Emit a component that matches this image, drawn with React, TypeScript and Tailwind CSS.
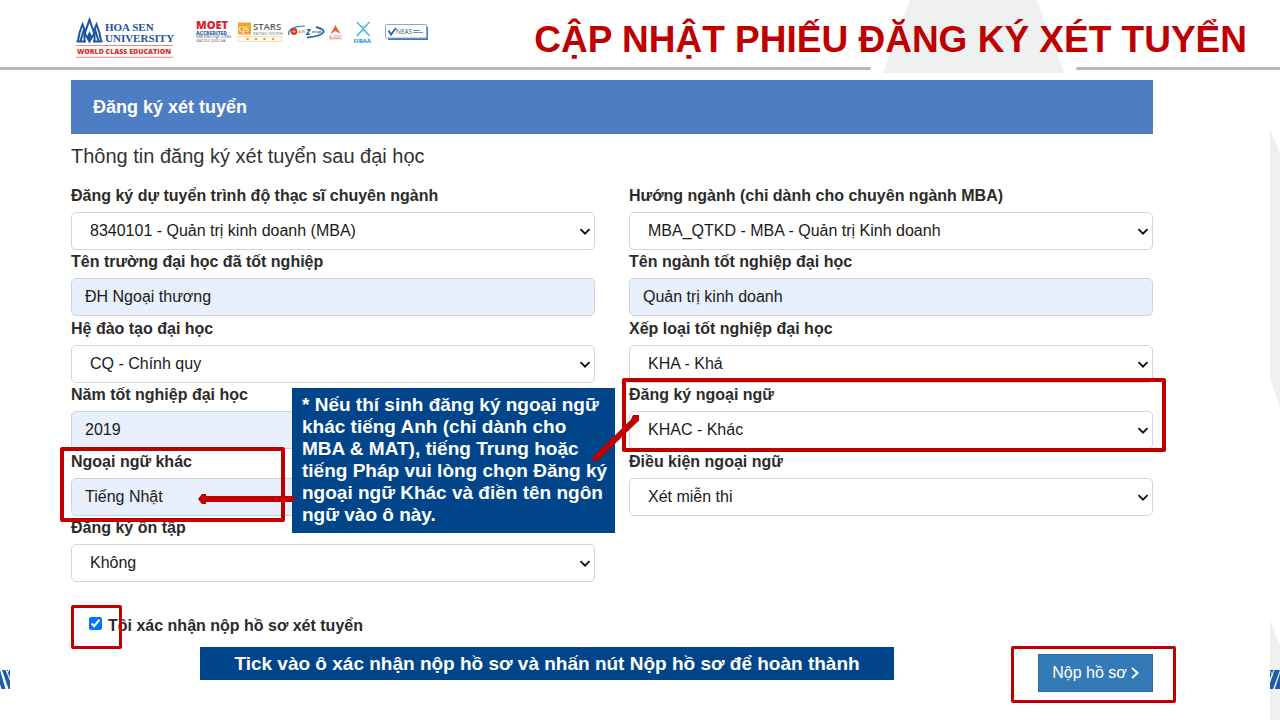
import { useState, type ReactNode } from "react";

type FieldProps = {
  id: string;
  label: string;
  value: string;
  kind: "select" | "text";
  children?: ReactNode;
};

function Field({ id, label, value, kind, children }: FieldProps) {
  return (
    <div className="relative flex flex-col justify-end">
      <label htmlFor={id} className="h-7 text-base leading-6 font-bold text-[#2b2b2b]">
        {label}
      </label>
      {kind === "select" ? (
        <div className="relative">
          <select
            id={id}
            defaultValue={value}
            className="block h-[38px] w-full appearance-none rounded-[5px] border border-[#d4d4d4] bg-white pr-8 pl-[18px] text-base text-[#1a1a1a]"
          >
            <option>{value}</option>
          </select>
          <svg
            className="pointer-events-none absolute top-4 right-1 text-[#111]"
            width="12"
            height="8"
            viewBox="0 0 12 8"
            aria-hidden="true"
          >
            <path d="M1.500 1.200 L6 5.700 L10.500 1.200" fill="none" stroke="currentColor" strokeWidth="1.900" />
          </svg>
        </div>
      ) : (
        <input
          id={id}
          type="text"
          defaultValue={value}
          className="h-[38px] w-full rounded-[5px] border border-[#cdd3de] bg-[#e8effd] px-[13px] text-base text-[#1a1a1a]"
        />
      )}
      {children}
    </div>
  );
}

function Brand() {
  return (
    <svg width="98" height="46" viewBox="76 14 98 46" role="img" aria-label="Hoa Sen University">
      <g fill="none" stroke="#1b55a3" strokeWidth="2">
        <path d="M84.500 41 L84.500 34 L89.500 20 L94.500 34 L94.500 41" />
        <path d="M78 41 L79.500 33 L82.500 24.500 L85 31 M101 41 L99.500 33 L96.500 24.500 L94 31" />
        <path d="M80.500 41 L83.500 31 L89.500 41.500 L95.500 31 L98.500 41" />
        <path d="M76.500 41.500 H86 M93 41.500 H102.500" />
      </g>
      <path d="M89.500 17 L91.500 23 H87.500 Z M89.500 31 L92 36.500 L89.500 42.500 L87 36.500 Z" fill="#1b55a3" />
      <g fill="#1b55a3" fontFamily="'Liberation Serif', serif" fontWeight="700">
        <text x="105" y="31" fontSize="11">HOA SEN</text>
        <text x="105" y="42" fontSize="11">UNIVERSITY</text>
      </g>
      <path d="M76 45.500 H173 M76 57.300 H173" stroke="#e58a86" />
      <text x="77" y="54" fontSize="7" fill="#dc2d27" fontFamily="'Open Sans', sans-serif" fontWeight="800">
        WORLD CLASS EDUCATION
      </text>
    </svg>
  );
}

function Accreditations() {
  return (
    <svg width="234" height="34" viewBox="196 14 234 34" role="img" aria-label="Accreditations" fontFamily="'Open Sans', sans-serif">
      <text x="196" y="29" fontSize="11" fontWeight="800" fill="#d8232a">MOET</text>
      <text x="196" y="34.500" fontSize="5" fontWeight="800" fill="#2a6eb2">ACCREDITED</text>
      <text x="196" y="38" fontSize="3" fill="#444">KIỂM ĐỊNH CHẤT LƯỢNG</text>
      <text x="196" y="41.500" fontSize="3" fill="#444">GIÁO DỤC QUỐC GIA</text>

      <rect x="238" y="22.500" width="13" height="12" fill="#eea52b" />
      <text x="239" y="31.500" fontSize="8" fill="#fff" fontFamily="'Liberation Serif', serif">QS</text>
      <text x="253" y="30" fontSize="9.500" fontWeight="600" fill="#5b5b5d">STARS</text>
      <text x="253" y="35" fontSize="4" fill="#777">RATING SYSTEM</text>
      <rect x="238" y="36.500" width="44" height="5" fill="#fffaf0" stroke="#f2d7a0" strokeWidth=".7" />
      <g fill="#eea52b">
        <circle cx="247.500" cy="39" r="1.300" />
        <circle cx="256" cy="39" r="1.300" />
        <circle cx="264.500" cy="39" r="1.300" />
        <circle cx="273" cy="39" r="1.300" />
      </g>

      <g fill="none" stroke="#2c6db3">
        <path d="M289 35 C287 30 294 26 305 26" strokeWidth="1.200" />
        <path d="M316 27 C329 30 325 36 307 37.500" strokeWidth="1.800" />
      </g>
      <circle cx="294" cy="31.500" r="3.400" fill="#d6392e" />
      <path d="M292.500 31.500 H295.500 M294 30 V33" stroke="#f8c54b" />
      <text x="298.500" y="32.500" fontSize="3" fill="#8a3a3a">AUN</text>
      <text x="306" y="35" fontSize="8" fontWeight="800" fontStyle="italic" fill="#1f6ab0">Z</text>
      <text x="312" y="33" fontSize="3.500" fontWeight="700" fill="#355b85">ev·qa</text>

      <path d="M335.500 25 L340.500 34 L335.500 31 L330.500 34 Z" fill="#e7622f" />
      <text x="329" y="37.500" fontSize="4.200" fill="#e07a63">ACBSP</text>
      <path d="M329 38.800 H342" stroke="#dd9c90" />

      <g fill="none" stroke="#57b3e2" strokeWidth="1.300">
        <path d="M357 22 C360 28 366 28 369.500 22" strokeWidth=".8" />
        <path d="M357 36 C360 29 366 29 369.500 36" strokeWidth=".8" />
        <path d="M357 22 L369.500 36 M369.500 22 L357 36" />
      </g>
      <text x="353.500" y="43" fontSize="5.800" fontWeight="800" fill="#43a5dc">FIBAA</text>

      <path d="M388 37.500 H426.500 V27 H428 V40 H388 Z" fill="#3f78c2" />
      <rect x="385.500" y="24.500" width="41" height="13.500" rx="1" fill="#fff" stroke="#87a9d8" />
      <path d="M388.500 30.500 L391 34.500 L396 28" fill="none" stroke="#2467b5" strokeWidth="1.900" />
      <text x="396" y="34" fontSize="6.500" fill="#4b5563">NEAS</text>
      <path d="M413 30.500 H420 M413 32.500 H423" stroke="#6a93cc" />
    </svg>
  );
}

// Faint shapes and blue hatching that run off the sides of the slide
function SideDecor() {
  return (
    <>
      <svg className="absolute top-0 right-0" width="10" height="720" viewBox="0 0 10 720" aria-hidden="true">
        <path d="M0 129 L10 153 V408 L0 378 Z M0 620 L10 645 V720 H0 Z" fill="#eff1f0" />
        <path d="M0 670 H3.500 L0 678 Z M4.500 670 H10 L3 689 H0 V683 Z M10 673 V689 H4.800 Z" fill="#1c5ba8" />
        <path d="M0 671 L3 676" stroke="#eff1f0" strokeWidth=".8" />
      </svg>
      <svg className="absolute top-0 left-0" width="10" height="720" viewBox="0 0 10 720" aria-hidden="true">
        <path d="M0 670 L5.500 689 H1.500 L0 684 Z M2 670 H5.500 L10 681 V689 H8.500 Z M6.500 670 H8.300 L7.800 671.500 Z M9.200 670 H10 V678 L8 673 Z" fill="#1c5ba8" />
      </svg>
    </>
  );
}

function Header() {
  return (
    <header className="relative">
      <svg className="absolute top-0 right-[216px]" width="181" height="73" viewBox="0 0 181 73" aria-hidden="true">
        <path d="M27 0 H154 L181 73 H0 Z" fill="#eff1f0" />
      </svg>
      <div className="relative flex h-[67px] items-start justify-between pr-[33px] pl-[76px]">
        <div className="flex gap-[22px] pt-[14px]">
          <Brand />
          <Accreditations />
        </div>
        <h1 className="pt-[19px] text-[37px] leading-[42px] font-bold whitespace-nowrap text-[#c00000]">
          CẬP NHẬT PHIẾU ĐĂNG KÝ XÉT TUYỂN
        </h1>
      </div>
      <div className="flex justify-between">
        <div className="mr-[205px] h-[3px] flex-1 rounded-r bg-[#b9b9be]" />
        <div className="h-[3px] w-[204px] rounded-l bg-[#b9b9be]" />
      </div>
    </header>
  );
}

const noteLines = [
  "* Nếu thí sinh đăng ký ngoại ngữ",
  "khác tiếng Anh (chỉ dành cho",
  "MBA & MAT), tiếng Trung hoặc",
  "tiếng Pháp vui lòng chọn Đăng ký",
  "ngoại ngữ Khác và điền tên ngôn",
  "ngữ vào ô này.",
];

function Note() {
  return (
    <>
      <div className="absolute top-[205px] left-[221px] z-10 w-[323px] bg-[#00458a] pt-[6px] pb-[7px] pl-[10px] text-[19px] leading-[22px] font-bold whitespace-nowrap text-white">
        {noteLines.map((line) => (
          <p key={line}>{line}</p>
        ))}
      </div>
      <svg
        className="pointer-events-none absolute top-[225px] left-[121px] z-20"
        width="455"
        height="100"
        viewBox="192 408 455 100"
        aria-hidden="true"
      >
        <path d="M294 499 H203" stroke="#c00000" strokeWidth="6" />
        <path d="M198 499 L202 494 H206 V504 H202 Z" fill="#c00000" />
        <path d="M594 460 L636 419" stroke="#c00000" strokeWidth="6" />
        <path d="M633 415 H639 V421 L635 423 L631 419 Z" fill="#c00000" />
      </svg>
    </>
  );
}

export default function App() {
  const [confirmed, setConfirmed] = useState(true);

  return (
    <div className="relative min-h-screen overflow-hidden bg-white font-['Liberation_Sans',Arial,sans-serif]">
      <SideDecor />
      <Header />
      <main className="relative pt-[10px] pr-[127px] pl-[71px]">
        <h2 className="bg-[#4e7dc3] px-[22px] py-[13px] text-lg leading-7 font-bold text-white">
          Đăng ký xét tuyển
        </h2>
        <h3 className="pt-2 text-xl leading-7 text-[#333]">
          Thông tin đăng ký xét tuyển sau đại học
        </h3>

        <form onSubmit={(e) => e.preventDefault()}>
          <div className="relative mt-[13px] grid min-h-[399px] grid-cols-2 grid-rows-6 gap-x-[34px]">
            <Field id="major" kind="select" label="Đăng ký dự tuyển trình độ thạc sĩ chuyên ngành" value="8340101 - Quản trị kinh doanh (MBA)" />
            <Field id="track" kind="select" label="Hướng ngành (chỉ dành cho chuyên ngành MBA)" value="MBA_QTKD - MBA - Quản trị Kinh doanh" />
            <Field id="school" kind="text" label="Tên trường đại học đã tốt nghiệp" value="ĐH Ngoại thương" />
            <Field id="degree" kind="text" label="Tên ngành tốt nghiệp đại học" value="Quản trị kinh doanh" />
            <Field id="mode" kind="select" label="Hệ đào tạo đại học" value="CQ - Chính quy" />
            <Field id="grade" kind="select" label="Xếp loại tốt nghiệp đại học" value="KHA - Khá" />
            <Field id="year" kind="text" label="Năm tốt nghiệp đại học" value="2019" />
            <Field id="language" kind="select" label="Đăng ký ngoại ngữ" value="KHAC - Khác">
              <div className="pointer-events-none absolute -top-[5px] -right-[13px] -bottom-[3px] -left-[7px] z-10 rounded-xs border-4 border-[#c00000]" />
            </Field>
            <Field id="other-language" kind="text" label="Ngoại ngữ khác" value="Tiếng Nhật">
              <div className="pointer-events-none absolute -top-[2px] -bottom-[6px] -left-[11px] z-10 w-[225px] rounded-xs border-4 border-[#c00000]" />
            </Field>
            <Field id="condition" kind="select" label="Điều kiện ngoại ngữ" value="Xét miễn thi" />
            <Field id="review" kind="select" label="Đăng ký ôn tập" value="Không" />
            <Note />
          </div>

          <div className="relative mt-[23px] flex h-11 w-fit items-center pl-[18px]">
            <div className="pointer-events-none absolute top-0 left-0 h-11 w-[51px] rounded-xs border-[3px] border-[#c00000]" />
            <input
              id="confirm"
              type="checkbox"
              checked={confirmed}
              onChange={(e) => setConfirmed(e.target.checked)}
              className="mb-2 size-[13px] accent-[#0075ff]"
            />
            <label htmlFor="confirm" className="pb-[2px] pl-[6px] text-base leading-6 font-bold text-[#2b2b2b]">
              Tôi xác nhận nộp hồ sơ xét tuyển
            </label>
          </div>

          <div className="-mt-[3px] -mr-[23px] flex items-start justify-between pl-[129px]">
            <p className="mt-px mr-[117px] flex-1 bg-[#00458a] text-center text-[19px] leading-[33px] font-bold text-white">
              Tick vào ô xác nhận nộp hồ sơ và nhấn nút Nộp hồ sơ để hoàn thành
            </p>
            <div className="rounded-xs border-[3px] border-[#c00000] pt-[5px] pr-5 pb-2 pl-6">
              <button
                type="submit"
                className="flex h-[38px] w-[115px] items-center justify-center gap-1 border border-[#2e6da4] bg-[#337ab7] text-base text-white"
              >
                Nộp hồ sơ
                <svg width="8" height="12" viewBox="0 0 8 12" aria-hidden="true">
                  <path d="M1 1 L6.500 6 L1 11" fill="none" stroke="currentColor" strokeWidth="2" />
                </svg>
              </button>
            </div>
          </div>
        </form>
      </main>
    </div>
  );
}
